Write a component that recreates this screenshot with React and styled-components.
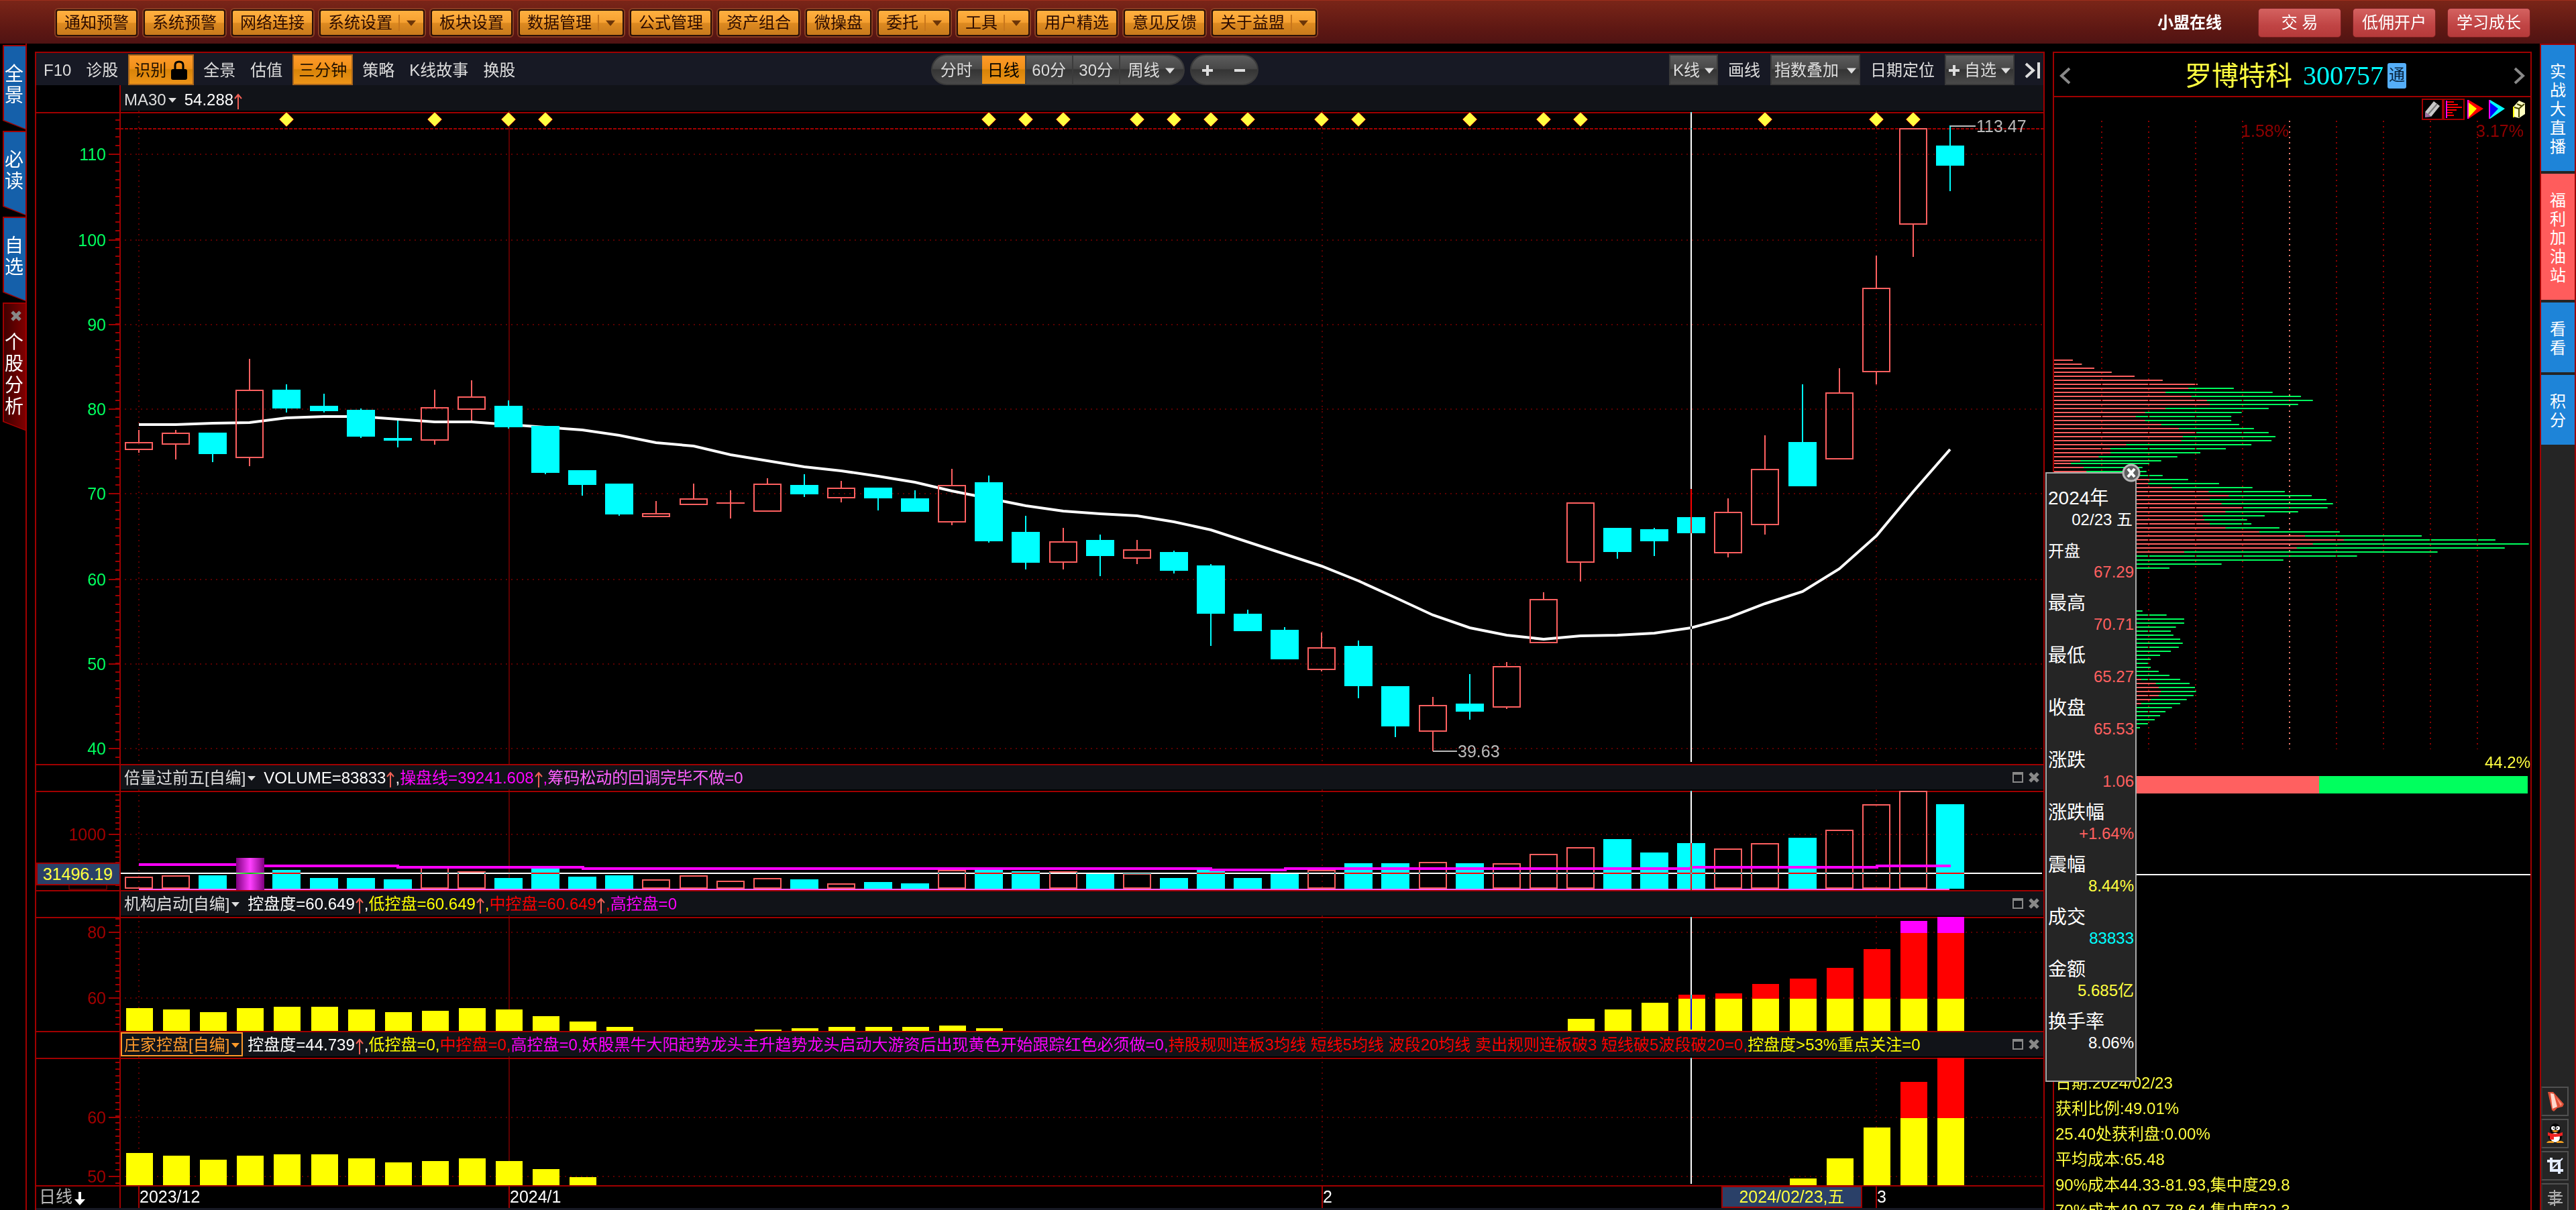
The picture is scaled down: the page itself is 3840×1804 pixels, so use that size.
import React from "react";
import styled, { createGlobalStyle, css } from "styled-components";

const RED = "#a00000";
const UP = "#ff6060";
const CYAN = "#00ffff";
const YELLOW = "#ffff40";

const menuItems = [
  ["通知预警"],
  ["系统预警"],
  ["网络连接"],
  ["系统设置", true],
  ["板块设置"],
  ["数据管理", true],
  ["公式管理"],
  ["资产组合"],
  ["微操盘"],
  ["委托", true],
  ["工具", true],
  ["用户精选"],
  ["意见反馈"],
  ["关于益盟", true],
];

// [up, high, top, bottom, low]
const candles = [
  [1, 641, 659, 671, 675],
  [1, 641, 645, 663, 685],
  [0, 645, 645, 677, 689],
  [1, 535, 581, 683, 695],
  [0, 573, 581, 609, 615],
  [0, 587, 605, 613, 615],
  [0, 609, 611, 651, 653],
  [0, 627, 653, 657, 667],
  [1, 581, 607, 657, 663],
  [1, 567, 591, 611, 627],
  [0, 597, 605, 637, 639],
  [0, 635, 635, 705, 707],
  [0, 701, 701, 723, 739],
  [0, 721, 721, 767, 769],
  [1, 747, 765, 771, 771],
  [1, 721, 743, 753, 753],
  [1, 731, 749, 751, 773],
  [1, 713, 721, 763, 763],
  [0, 707, 723, 737, 741],
  [1, 717, 727, 743, 749],
  [0, 727, 727, 743, 761],
  [0, 731, 743, 763, 763],
  [1, 699, 723, 779, 783],
  [0, 709, 719, 807, 809],
  [0, 769, 793, 839, 849],
  [1, 787, 807, 839, 849],
  [0, 797, 805, 829, 859],
  [1, 805, 819, 833, 841],
  [0, 821, 823, 851, 855],
  [0, 841, 843, 915, 963],
  [0, 909, 915, 941, 941],
  [0, 935, 939, 983, 983],
  [1, 943, 965, 999, 1001],
  [0, 955, 963, 1023, 1041],
  [0, 1023, 1023, 1083, 1099],
  [1, 1039, 1051, 1091, 1120],
  [0, 1005, 1049, 1061, 1073],
  [1, 987, 993, 1055, 1057],
  [1, 883, 893, 959, 959],
  [1, 749, 749, 839, 867],
  [0, 787, 787, 823, 833],
  [0, 787, 789, 807, 829],
  [0, 729, 771, 795, 795],
  [1, 743, 763, 825, 831],
  [1, 649, 699, 783, 797],
  [0, 573, 659, 725, 725],
  [1, 549, 585, 685, 685],
  [1, 381, 429, 555, 573],
  [1, 191, 191, 335, 383],
  [0, 187, 217, 247, 285],
];

const ma30 = [
  633, 633, 631, 630, 623, 621, 621, 625, 629, 629, 633, 637, 641, 649, 660,
  665, 678, 687, 696, 702, 710, 719, 732, 743, 754, 762, 766, 769, 778, 790,
  808, 826, 844, 866, 891, 917, 936, 947, 953, 948, 947, 944, 936, 921, 900,
  882, 848, 799, 733, 670,
];

const volumeTops = [
  1307, 1305, 1305, 1279, 1297, 1309, 1309, 1311, 1293, 1299, 1309, 1295, 1307,
  1305, 1311, 1305, 1313, 1309, 1311, 1317, 1315, 1317, 1297, 1297, 1299, 1299,
  1303, 1302, 1309, 1297, 1309, 1303, 1297, 1287, 1287, 1285, 1287, 1287, 1273,
  1263, 1251, 1271, 1257, 1265, 1257, 1249, 1237, 1199, 1179, 1199,
];

const startTops = {
  0: 1503, 1: 1505, 2: 1509, 3: 1503, 4: 1501, 5: 1501, 6: 1505, 7: 1509,
  8: 1507, 9: 1503, 10: 1505, 11: 1515, 12: 1523, 13: 1531, 17: 1535,
  18: 1533, 19: 1531, 20: 1531, 21: 1531, 22: 1529, 23: 1533, 39: 1519,
  40: 1505, 41: 1495, 42: 1483, 43: 1481, 44: 1467, 45: 1459, 46: 1443,
  47: 1415, 48: 1373, 49: 1367,
};

const bankerTops = {
  0: 1719, 1: 1723, 2: 1729, 3: 1723, 4: 1721, 5: 1721, 6: 1727, 7: 1733,
  8: 1731, 9: 1727, 10: 1731, 11: 1743, 12: 1755, 45: 1757, 46: 1727,
  47: 1681, 48: 1613, 49: 1577,
};

const signals = [
  4, 8, 10, 11, 23, 24, 25, 27, 28, 29, 30, 32, 33, 36, 38, 39, 44, 47, 48,
];

// chip distribution rows: [profit, total]
const chipsHigh = [
  [52, 52], [77, 77], [112, 112], [160, 160], [224, 224], [302, 302],
  [399, 399], [374, 500], [310, 608], [382, 687], [425, 720], [433, 679],
  [310, 597], [253, 522], [227, 493], [253, 493], [298, 515], [347, 556],
  [395, 597], [358, 616], [354, 605], [201, 549], [157, 478], [157, 407],
  [124, 343], [73, 298],
];
const chipsMid = [
  [47, 265], [82, 246], [90, 257], [180, 302], [265, 373], [262, 459],
  [328, 552], [430, 642], [486, 717], [433, 758], [466, 776], [526, 761],
  [477, 679], [414, 586], [418, 537], [433, 549], [477, 627], [571, 795],
  [698, 1023], [806, 1228], [720, 1321], [675, 1254], [362, 1067], [0, 843],
  [0, 638], [0, 466], [0, 321],
];
const chipsLow = [
  [0, 246], [0, 313], [0, 362], [0, 362], [231, 339], [0, 325], [0, 332],
  [0, 351], [0, 358], [0, 347], [0, 325], [0, 295], [0, 269], [0, 261],
  [0, 269], [0, 291], [0, 321], [242, 351], [283, 377], [291, 392],
  [297, 395], [291, 388], [269, 369], [242, 351], [0, 328], [0, 310],
  [0, 295], [0, 280], [0, 261], [0, 239],
];
const chipGroups = [
  [537, chipsHigh],
  [691, chipsMid],
  [911, chipsLow],
];
const CHIP_SCALE = 0.5357;

const quote = [
  ["开盘", "67.29", UP],
  ["最高", "70.71", UP],
  ["最低", "65.27", UP],
  ["收盘", "65.53", UP],
  ["涨跌", "1.06", UP],
  ["涨跌幅", "+1.64%", UP],
  ["震幅", "8.44%", YELLOW],
  ["成交", "83833", CYAN],
  ["金额", "5.685亿", YELLOW],
  ["换手率", "8.06%", "#fff"],
];

const cx = (i) => 207 + Math.round((i * 2700) / 49);
const range = (from, to, step) => {
  const out = [];
  for (let v = from; v <= to; v += step) out.push(Math.round(v));
  return out;
};

const GlobalStyle = createGlobalStyle`
  * { box-sizing: border-box; }
  body {
    margin: 0;
    background: #000;
    color: #ddd;
    overflow: hidden;
    font: 24px/28px "Liberation Sans", "Noto Sans CJK SC", sans-serif;
  }
  button {
    font: inherit;
    color: inherit;
    background: none;
    border: none;
    padding: 0;
    margin: 0;
    white-space: nowrap;
    cursor: pointer;
  }
  svg { display: block; flex: none; }
`;

/* ---------- top menu ---------- */

const MenuBar = styled.header`
  display: flex;
  align-items: center;
  height: 65px;
  padding: 2px 68px 0 83px;
  border-top: 1px solid #9b2e1c;
  background: linear-gradient(#7a2518, #5c1713 70%, #501313);
`;

const MenuList = styled.nav`
  display: flex;
  gap: 9px;
  flex: 1;
`;

const MenuButton = styled.button`
  display: flex;
  align-items: center;
  height: 40px;
  padding: 0 11px;
  color: #2a0a00;
  border: 2px solid #2a1005;
  border-radius: 4px;
  box-shadow: 0 0 0 2px #8a3d22;
  background: linear-gradient(#ffb040, #f5a030 48%, #dd8a20 52%, #c87a1c);
`;

const MenuArrow = styled.span`
  margin-left: 9px;
  padding-left: 10px;
  border-left: 2px solid #c8761c;
  display: flex;
  align-items: center;
  height: 24px;
`;

const OnlineLabel = styled.a`
  color: #fff;
  font-weight: bold;
  text-decoration: none;
  margin-right: 54px;
`;

const RedButton = styled.button`
  width: 124px;
  height: 44px;
  margin-left: 17px;
  color: #fff;
  white-space: pre;
  border-radius: 5px;
  border: 1px solid #7a2020;
  background: linear-gradient(#d46260, #c04444 60%, #b53a3a);

  &:first-of-type {
    margin-left: 0;
  }
`;

/* ---------- page frame ---------- */

const Frame = styled.div`
  display: flex;
  align-items: stretch;
  height: calc(100vh - 65px);
  overflow: hidden;
`;

const LeftRail = styled.nav`
  width: 36px;
  margin-left: 4px;
  padding-top: 2px;
  border-right: 2px solid ${RED};
`;

const LeftTab = styled.button`
  display: flex;
  flex-direction: column;
  align-items: flex-start;
  justify-content: flex-start;
  position: relative;
  width: 36px;
  height: ${(p) => (p.$active ? 192 : 127)}px;
  margin-bottom: 1px;
  padding: ${(p) => (p.$active ? "0" : "28px")} 3px 0;
  color: #fff;
  font-size: 28px;
  line-height: 32px;
  white-space: normal;
  word-break: break-all;
  background: ${RED};
  clip-path: polygon(0 0, 100% 0, 100% 100%, 0 calc(100% - 14px));
  text-align: left;

  &::before {
    content: "";
    position: absolute;
    inset: 2px;
    background: ${(p) =>
      p.$active ? "linear-gradient(90deg, #400000, #800000)" : "#1560aa"};
    clip-path: polygon(0 0, 100% 0, 100% 100%, 0 calc(100% - 13px));
  }
`;

const TabText = styled.span`
  position: relative;
  display: block;
  width: 28px;
`;

const TabClose = styled.span`
  position: relative;
  display: block;
  padding: 12px 0 16px 9px;
`;

const ChartPanel = styled.main`
  flex: 1;
  min-width: 0;
  margin: 12px 12px 0 12px;
  border: 2px solid ${RED};
  border-bottom: none;
`;

const ToolBar = styled.div`
  display: flex;
  justify-content: space-between;
  height: 48px;
  padding: 2px 0 0;
  background: #171924;
`;

const ToolGroup = styled.div`
  display: flex;
  height: 46px;
`;

const flatButton = css`
  height: 46px;
  padding: 2px 11px 0;
`;

const ToolButton = styled.button`
  ${flatButton}
  ${(p) => p.$last && "padding-right: 4px;"}
`;

const HotButton = styled.button`
  ${flatButton}
  display: flex;
  align-items: center;
  gap: 6px;
  margin: 0 3px 0 4px;
  padding: 2px 7px 0;
  color: #201000;
  border: 2px solid #a8651c;
  background: linear-gradient(#ff9a2a, #f09018 46%, #d88408 50%, #ee9418);
`;

const grey = css`
  background: linear-gradient(#5c5c5c, #484848 46%, #343434 50%, #4a4a4a);
`;

const Pill = styled.div`
  ${grey}
  display: flex;
  overflow: hidden;
  margin-right: ${(p) => (p.$last ? 0 : 8)}px;
  border-radius: 23px;
  border: 2px solid #3a3a3a;
`;

const Period = styled.button`
  display: flex;
  align-items: center;
  justify-content: center;
  gap: 8px;
  width: ${(p) => p.$w}px;
  padding-top: 2px;
  border-right: 2px solid ${(p) => (p.$edge ? "transparent" : "#3c3c3c")};
  ${(p) =>
    p.$active &&
    css`
      color: #000;
      background: linear-gradient(#ff9a2a, #f09018 46%, #d88408 50%, #ee9418);
    `}
`;

const GreyButton = styled.button`
  ${grey}
  display: flex;
  align-items: center;
  gap: ${(p) => (p.$wide ? 12 : 7)}px;
  height: 46px;
  padding: 2px 4px 0;
  border: 2px solid #3a3a3a;
  margin: 0 4px;
`;

const IndicatorBar = styled.div`
  display: flex;
  align-items: center;
  height: ${(p) => (p.$first ? 38 : 36)}px;
  padding-top: ${(p) => (p.$first ? 4 : 0)}px;
  margin-left: 124px;
  border-left: 2px solid ${RED};
  background: #111318;
  white-space: nowrap;
`;

const Divider = styled.div`
  height: 2px;
  background: ${RED};
`;

const IndicatorName = styled.button`
  display: flex;
  align-items: center;
  gap: 3px;
  height: 36px;
  padding: 2px 3px 0;
  margin-right: 7px;
  border: 2px solid ${(p) => (p.$selected ? "#ff9a2a" : "transparent")};
  color: ${(p) => (p.$selected ? "#ff9a2a" : "#ddd")};
`;

const Reading = styled.span`
  padding-top: 2px;
  color: ${(p) => p.$color};
`;

const Rise = styled.span`
  display: inline-block;
  width: 14px;
  height: 24px;
  vertical-align: -6px;
`;

const WindowButtons = styled.div`
  display: flex;
  gap: 8px;
  margin-left: auto;
  padding-right: 6px;
`;

const Plot = styled.svg`
  width: 100%;
  height: auto;
  overflow: visible;
  background: #000;
  text {
    font: 25px "Liberation Sans", "Noto Sans CJK SC", sans-serif;
  }
`;

const Crosshair = styled.path`
  stroke: #fff;
  stroke-width: 2;
  mix-blend-mode: difference;
`;

const FooterStrip = styled.div`
  height: 6px;
  background: #171924;
`;

/* ---------- right side ---------- */

const ChipPanel = styled.aside`
  position: relative;
  width: 714px;
  margin: 12px 12px 0 0;
  border: 2px solid ${RED};
  border-bottom: none;
`;

const StockTitle = styled.div`
  display: flex;
  align-items: center;
  justify-content: space-between;
  height: 66px;
  padding: 4px 6px 0;
  border-bottom: 2px solid ${RED};
`;

const StockName = styled.h1`
  display: flex;
  align-items: center;
  margin: 0 0 0 10px;
  font-size: 40px;
  line-height: 48px;
  font-weight: normal;
  color: ${YELLOW};
`;

const StockCode = styled.span`
  margin: 0 6px 0 16px;
  font-family: "Liberation Serif", serif;
  color: ${CYAN};
`;

const Badge = styled.span`
  width: 28px;
  height: 38px;
  font-size: 24px;
  line-height: 36px;
  text-align: center;
  color: #06223c;
  background: #55aef8;
  border-radius: 3px;
`;

const ChipTools = styled.div`
  display: flex;
  justify-content: flex-end;
  height: 34px;
  padding: 2px 2px 0 0;
`;

const ChipTool = styled.button`
  width: 32px;
  height: 32px;
  border: 2px solid ${(p) => (p.$framed ? RED : "transparent")};
`;

const ChipSummary = styled.div`
  height: 38px;
  padding-top: 4px;
  color: ${YELLOW};
  text-align: right;
`;

const RatioBar = styled.div`
  display: flex;
  height: 26px;
  margin-right: 4px;
  background: linear-gradient(90deg, ${UP} 56%, #00ff5e 56%);
`;

const LevelLine = styled.div`
  height: 413px;
  padding-top: 120px;

  &::before {
    content: "";
    display: block;
    height: 2px;
    background: #fff;
  }
`;

const CostList = styled.ul`
  margin: 0;
  padding: 0 2px;
  list-style: none;
  color: ${YELLOW};
  line-height: 38px;
`;

const Popup = styled.section`
  position: absolute;
  left: -13px;
  top: 625px;
  width: 136px;
  height: 909px;
  padding: 20px 2px 0;
  border: 2px solid #aaa;
  background: #252525;
  color: #fff;
`;

const PopupClose = styled.button`
  position: absolute;
  top: -15px;
  right: -8px;
`;

const Year = styled.div`
  font-size: 28px;
  line-height: 34px;
`;

const Day = styled.div`
  margin-bottom: 15px;
  padding-right: 2px;
  line-height: 30px;
  text-align: right;
`;

const QuoteList = styled.dl`
  margin: 0;
`;

const QuoteLabel = styled.dt`
  font-size: ${(p) => (p.$small ? 24 : 28)}px;
  line-height: 34px;
`;

const QuoteValue = styled.dd`
  margin: 0 0 16px;
  line-height: 28px;
  text-align: right;
  color: ${(p) => p.$color};
`;

const RightRail = styled.nav`
  display: flex;
  flex-direction: column;
  width: 54px;
  border-left: 2px solid ${RED};
  border-right: 2px solid ${RED};
  border-top: 2px solid ${RED};
  background: #252525;
`;

const SideTab = styled.button`
  width: 50px;
  height: ${(p) => p.$h}px;
  margin-bottom: 4px;
  padding: 4px 13px 0;
  color: #fff;
  line-height: 28px;
  white-space: normal;
  word-break: break-all;
  background: ${(p) => (p.$hot ? "#ff5c5c" : "#1e84d8")};
`;

const SideTools = styled.div`
  margin-top: auto;
  height: 184px;
`;

const SideTool = styled.button`
  display: flex;
  align-items: center;
  justify-content: center;
  width: 41px;
  height: 44px;
  margin-bottom: 4px;
  border: 2px solid #505050;
  border-left-color: #333;
`;

const Caret = ({ size = 12, color = "#ddd" }) => (
  <svg width={size} height={size} viewBox="0 0 12 12">
    <path d="M0 3h12L6 10z" fill={color} />
  </svg>
);

const Cross = ({ size = 16 }) => (
  <svg width={size} height={size} viewBox="0 0 16 16">
    <path d="M2 2l12 12M14 2L2 14" stroke="#888" strokeWidth="5" />
  </svg>
);

const Axis = ({ top, bottom, from, step, labels, color }) => (
  <>
    <path
      d={range(from, bottom - 3, step)
        .map((y) => `M172 ${y}h6`)
        .join("")}
      stroke={RED}
      strokeWidth="2"
    />
    <rect x="178" y={top} width="2" height={bottom - top} fill={RED} />
    {labels.map(([text, y]) => (
      <g key={text}>
        <path d={`M162 ${y}h16`} stroke={RED} strokeWidth="2" />
        <path
          d={`M186 ${y}H3046`}
          stroke="#5c0000"
          strokeWidth="2"
          strokeDasharray="2 6"
        />
        <text x="158" y={y + 9} textAnchor="end" fill={color}>
          {text}
        </text>
      </g>
    ))}
    <path
      d={`M207 ${top}V${bottom}M1971 ${top}V${bottom}M2797 ${top}V${bottom}`}
      stroke="#5c0000"
      strokeWidth="2"
      strokeDasharray="2 6"
    />
    <path d={`M759 ${top}V${bottom}`} stroke="#5c0000" strokeWidth="2" />
    <rect x="54" y={top + 2} width="2992" height="2" fill={RED} />
  </>
);

const PricePlot = () => (
  <Plot viewBox="54 165 2992 974" role="img" aria-label="K线">
    <Axis
      top={165}
      bottom={1139}
      from={179}
      step={12.66}
      color="#00ff5e"
      labels={[
        ["110", 230],
        ["100", 358],
        ["90", 484],
        ["80", 610],
        ["70", 736],
        ["60", 864],
        ["50", 990],
        ["40", 1116],
      ]}
    />
    <path d="M172 192H3046" stroke={RED} strokeWidth="2" strokeDasharray="5 2" />
    <polyline
      points={ma30.map((y, i) => `${cx(i)},${y}`).join(" ")}
      fill="none"
      stroke="#fff"
      strokeWidth="4"
    />
    {candles.map(([up, high, top, bottom, low], i) => {
      const x = cx(i);
      const color = up ? UP : CYAN;
      return (
        <g key={i} stroke={color} strokeWidth="2">
          <path d={`M${x} ${high}V${top}M${x} ${bottom}V${low}`} />
          {bottom - top > 2 ? (
            <rect
              x={x - 20}
              y={top + 1}
              width="40"
              height={bottom - top - 2}
              fill={up ? "none" : color}
            />
          ) : (
            <path d={`M${x - 21} ${top + 1}h42`} />
          )}
        </g>
      );
    })}
    {signals.map((i) => (
      <path
        key={i}
        d={`M${cx(i)} 167l11 11l-11 11l-11 -11z`}
        fill={YELLOW}
        stroke={RED}
      />
    ))}
    <path d="M2907 188h38M2136 1120h36" stroke="#bbb" strokeWidth="2" />
    <text x="2946" y="197" fill="#bbb">113.47</text>
    <text x="2173" y="1129" fill="#bbb">39.63</text>
    <Crosshair d="M2521 167V1136" />
  </Plot>
);

const VolumePlot = () => (
  <Plot viewBox="54 1177 2992 150" role="img" aria-label="成交量">
    <defs>
      <linearGradient id="burst">
        <stop offset="0" stopColor="#800080" />
        <stop offset="0.5" stopColor="#ff40ff" />
        <stop offset="1" stopColor="#800080" />
      </linearGradient>
    </defs>
    <Axis
      top={1177}
      bottom={1327}
      from={1185}
      step={8.45}
      color={RED}
      labels={[["1000", 1244]]}
    />
    <rect x="103" y="1295" width="56" height="31" fill="#000" stroke={RED} />
    {volumeTops.map((y, i) => {
      const x = cx(i);
      if (i === 3) return null;
      return candles[i][0] ? (
        <rect
          key={i}
          x={x - 20}
          y={y + 1}
          width="40"
          height={1324 - y - 1}
          fill="none"
          stroke={UP}
          strokeWidth="2"
        />
      ) : (
        <rect key={i} x={x - 21} y={y} width="42" height={1325 - y} fill={CYAN} />
      );
    })}
    <path
      d="M207 1289H372V1291H593V1293H869V1295H1805V1297H1916V1295H2521V1293H2798V1291H2908"
      fill="none"
      stroke="#f0f"
      strokeWidth="4"
    />
    <path d="M207 1326H2906" stroke="#ff60ff" strokeWidth="2" />
    <rect x="352" y="1279" width="42" height="48" fill="url(#burst)" />
    <Crosshair d="M180 1302H3044" />
    <Crosshair d="M2521 1179V1327" />
    <rect x="55" y="1287" width="124" height="32" fill="#2a4068" stroke={RED} strokeWidth="2" />
    <text x="168" y="1312" textAnchor="end" fill={YELLOW}>31496.19</text>
  </Plot>
);

const ControlPlot = ({ label, top, bottom, from, step, labels, tops, mid, high }) => (
  <Plot viewBox={`54 ${top} 2992 ${bottom - top}`} role="img" aria-label={label}>
    <Axis
      top={top}
      bottom={bottom}
      from={from}
      step={step}
      color={RED}
      labels={labels}
    />
    {Object.entries(tops).map(([i, y]) => {
      const x = cx(Number(i)) - 19;
      const yellowTop = Math.max(y, mid);
      const redTop = Math.max(y, high);
      return (
        <g key={i}>
          <rect x={x} y={yellowTop} width="40" height={bottom - yellowTop} fill="#ff0" />
          {y < mid && (
            <rect x={x} y={redTop} width="40" height={mid - redTop} fill="#f00" />
          )}
          {y < high && (
            <rect x={x} y={y} width="40" height={high - y} fill="#f0f" />
          )}
        </g>
      );
    })}
    <Crosshair d={`M2521 ${top + 2}V${bottom - 2}`} />
  </Plot>
);

const DateAxis = () => (
  <Plot viewBox="54 1769 2992 32" role="img" aria-label="日期">
    <path
      d="M179 1769v32M207 1769v32M759 1769v32M1971 1769v32M2797 1769v32"
      stroke={RED}
      strokeWidth="2"
    />
    <text x="58" y="1793" fill="#bbb">日线</text>
    <path d="M117 1777h4v11h6l-8 9l-8 -9h6z" fill="#fff" />
    <g fill="#fff">
      <text x="208" y="1793">2023/12</text>
      <text x="760" y="1793">2024/1</text>
      <text x="1972" y="1793">2</text>
      <text x="2798" y="1793">3</text>
    </g>
    <rect x="2567" y="1769" width="208" height="31" fill="#2a4068" stroke={RED} strokeWidth="2" />
    <text x="2671" y="1793" textAnchor="middle" fill={YELLOW}>2024/02/23,五</text>
  </Plot>
);

// parts: [text, color, rising]
const Indicator = ({ name, selected, first, parts }) => (
  <IndicatorBar $first={first}>
    <IndicatorName $selected={selected}>
      {name}
      <Caret color={selected ? "#ff9a2a" : "#ddd"} />
    </IndicatorName>
    {parts.map(([text, color, rising], i) => (
      <Reading key={text} $color={color}>
        {text}
        {rising && (
          <Rise>
            <svg width="14" height="24" viewBox="0 0 14 24">
              <path d="M7 24V2M2 8L7 2L12 8" fill="none" stroke="#f26055" strokeWidth="2" />
            </svg>
          </Rise>
        )}
        {i < parts.length - 1 && ","}
      </Reading>
    ))}
    {!first && (
      <WindowButtons>
        <button aria-label="最大化">
          <svg width="16" height="16" viewBox="0 0 16 16">
            <path d="M1 2h14v13H1z" fill="none" stroke="#888" strokeWidth="2" />
            <path d="M0 2h16" stroke="#888" strokeWidth="4" />
          </svg>
        </button>
        <button aria-label="关闭">
          <Cross />
        </button>
      </WindowButtons>
    )}
  </IndicatorBar>
);

const ChipPlot = () => (
  <Plot viewBox="3062 180 710 940" role="img" aria-label="筹码分布">
    {chipGroups.map(([start, rows]) =>
      rows.map(([profit, total], k) => {
        const y = start + k * 6;
        return (
          <g key={y}>
            <rect x="3062" y={y} width={total * CHIP_SCALE} height="2" fill="#00ff5e" />
            <rect x="3062" y={y} width={profit * CHIP_SCALE} height="2" fill={UP} />
          </g>
        );
      })
    )}
    {range(3133, 3693, 70).map((x) => (
      <path
        key={x}
        d={`M${x} 181V1118`}
        stroke={x === 3413 ? "#ff8070" : "#900000"}
        strokeWidth="2"
        strokeDasharray="2 6"
      />
    ))}
    <text x="3412" y="205" textAnchor="end" fill="#900000">1.58%</text>
    <text x="3762" y="205" textAnchor="end" fill="#900000">3.17%</text>
  </Plot>
);

const Chevron = ({ d }) => (
  <svg width="20" height="26" viewBox="0 0 20 26">
    <path d={d} fill="none" stroke="#888" strokeWidth="4" />
  </svg>
);

const App = () => {
  return (
    <>
      <GlobalStyle />
      <MenuBar>
        <MenuList>
          {menuItems.map(([label, hasMenu]) => (
            <MenuButton key={label}>
              {label}
              {hasMenu && (
                <MenuArrow>
                  <Caret size={14} color="#6b3508" />
                </MenuArrow>
              )}
            </MenuButton>
          ))}
        </MenuList>
        <OnlineLabel href="#online">小盟在线</OnlineLabel>
        <RedButton>交 易</RedButton>
        <RedButton>低佣开户</RedButton>
        <RedButton>学习成长</RedButton>
      </MenuBar>
      <Frame>
        <LeftRail>
          {["全景", "必读", "自选"].map((label) => (
            <LeftTab key={label}>
              <TabText>{label}</TabText>
            </LeftTab>
          ))}
          <LeftTab $active>
            <TabClose>
              <Cross />
            </TabClose>
            <TabText>个股分析</TabText>
          </LeftTab>
        </LeftRail>
        <ChartPanel>
          <ToolBar>
            <ToolGroup>
              <ToolButton>F10</ToolButton>
              <ToolButton>诊股</ToolButton>
              <HotButton>
                识别
                <svg width="26" height="30" viewBox="0 0 26 30">
                  <path d="M7 13V7q0-5 6-5t6 5v6" fill="none" stroke="#000" strokeWidth="3" />
                  <rect x="1" y="13" width="24" height="16" rx="3" fill="#000" />
                </svg>
              </HotButton>
              <ToolButton>全景</ToolButton>
              <ToolButton>估值</ToolButton>
              <HotButton>三分钟</HotButton>
              <ToolButton>策略</ToolButton>
              <ToolButton>K线故事</ToolButton>
              <ToolButton>换股</ToolButton>
            </ToolGroup>
            <ToolGroup>
              <Pill>
                <Period $w={74} $edge>分时</Period>
                <Period $w={66} $active>日线</Period>
                <Period $w={70}>60分</Period>
                <Period $w={70}>30分</Period>
                <Period $w={94} $edge>
                  周线
                  <Caret size={14} />
                </Period>
              </Pill>
              <Pill $last>
                <Period $w={50} $edge aria-label="放大">
                  <svg width="18" height="18" viewBox="0 0 18 18">
                    <path d="M9 1v16M1 9h16" stroke="#ddd" strokeWidth="4" />
                  </svg>
                </Period>
                <Period $w={48} $edge aria-label="缩小">
                  <svg width="18" height="18" viewBox="0 0 18 18">
                    <path d="M0 9h16" stroke="#ddd" strokeWidth="4" />
                  </svg>
                </Period>
              </Pill>
            </ToolGroup>
            <ToolGroup>
              <GreyButton>
                K线
                <Caret size={14} />
              </GreyButton>
              <ToolButton>画线</ToolButton>
              <GreyButton $wide>
                指数叠加
                <Caret size={14} />
              </GreyButton>
              <ToolButton>日期定位</ToolButton>
              <GreyButton>
                <svg width="16" height="16" viewBox="0 0 16 16">
                  <path d="M8 0v16M0 8h16" stroke="#ddd" strokeWidth="4" />
                </svg>
                自选
                <Caret size={14} />
              </GreyButton>
              <ToolButton $last aria-label="展开">
                <svg width="24" height="26" viewBox="0 0 24 26">
                  <path d="M2 3l11 10L2 23" fill="none" stroke="#ddd" strokeWidth="4" />
                  <path d="M21 1v24" stroke="#ddd" strokeWidth="4" />
                </svg>
              </ToolButton>
            </ToolGroup>
          </ToolBar>
          <Indicator first name="MA30" parts={[["54.288", "#fff", true]]} />
          <PricePlot />
          <Divider />
          <Indicator
            name="倍量过前五[自编]"
            parts={[
              ["VOLUME=83833", "#fff", true],
              ["操盘线=39241.608", "#f0f", true],
              ["筹码松动的回调完毕不做=0", "#ff60ff"],
            ]}
          />
          <VolumePlot />
          <Divider />
          <Indicator
            name="机构启动[自编]"
            parts={[
              ["控盘度=60.649", "#fff", true],
              ["低控盘=60.649", "#ff0", true],
              ["中控盘=60.649", "#f00", true],
              ["高控盘=0", "#f0f"],
            ]}
          />
          <ControlPlot
            label="机构启动"
            top={1365}
            bottom={1537}
            from={1370}
            step={9.8}
            labels={[
              ["80", 1390],
              ["60", 1488],
            ]}
            tops={startTops}
            mid={1489}
            high={1391}
          />
          <Divider />
          <Indicator
            selected
            name="庄家控盘[自编]"
            parts={[
              ["控盘度=44.739", "#fff", true],
              ["低控盘=0", "#ff0"],
              ["中控盘=0", "#f00"],
              ["高控盘=0", "#f0f"],
              [
                "妖股黑牛大阳起势龙头主升趋势龙头启动大游资后出现黄色开始跟踪红色必须做=0",
                "#f0f",
              ],
              [
                "持股规则连板3均线 短线5均线 波段20均线 卖出规则连板破3 短线破5波段破20=0",
                "#f00",
              ],
              ["控盘度>53%重点关注=0", "#ff0"],
            ]}
          />
          <ControlPlot
            label="庄家控盘"
            top={1575}
            bottom={1767}
            from={1584}
            step={10}
            labels={[
              ["60", 1666],
              ["50", 1754],
            ]}
            tops={bankerTops}
            mid={1667}
            high={0}
          />
          <Divider />
          <DateAxis />
          <FooterStrip />
        </ChartPanel>
        <ChipPanel>
          <StockTitle>
            <button aria-label="上一只">
              <Chevron d="M17 2L5 13L17 24" />
            </button>
            <StockName>
              罗博特科
              <StockCode>300757</StockCode>
              <Badge>通</Badge>
            </StockName>
            <button aria-label="下一只">
              <Chevron d="M3 2L15 13L3 24" />
            </button>
          </StockTitle>
          <ChipTools>
            <ChipTool $framed aria-label="画笔">
              <svg width="28" height="28" viewBox="0 0 28 28">
                <path d="M3 18L16 2l9 7L12 25z" fill="#c8c8c8" />
                <path d="M3 18l0 8l9-1z" fill="#a070a0" />
                <path d="M8 21L21 6" stroke="#777" strokeWidth="2" />
              </svg>
            </ChipTool>
            <ChipTool $framed aria-label="分布">
              <svg width="28" height="28" viewBox="0 0 28 28">
                <path
                  d="M4 3h10M4 7h16M4 11h22M4 15h14M4 19h8M4 23h10"
                  stroke="#f00"
                  strokeWidth="2"
                />
                <path d="M3 1v26" stroke="#f0f" strokeWidth="2" />
              </svg>
            </ChipTool>
            <ChipTool aria-label="获利">
              <svg width="28" height="28" viewBox="0 0 28 28">
                <path d="M4 0l22 13L4 28z" fill="#f00" />
                <path d="M4 4l12 9L4 26z" fill="#ff0" />
                <path d="M3 0v28" stroke="#f0f" strokeWidth="2" />
              </svg>
            </ChipTool>
            <ChipTool aria-label="套牢">
              <svg width="28" height="28" viewBox="0 0 28 28">
                <path d="M4 0l22 13L4 28z" fill="#0ff" />
                <path d="M4 4l12 9L4 26z" fill="#00f" />
                <path d="M3 0v28" stroke="#f0f" strokeWidth="2" />
              </svg>
            </ChipTool>
            <ChipTool aria-label="说明">
              <svg width="28" height="28" viewBox="0 0 28 28">
                <path d="M7 10l8-9l9 4v16l-9 6l-8-2z" fill="#ffffc0" />
                <path d="M8 11l7 2v13M15 13l8-7M12 6l7 3" fill="none" stroke="#444400" strokeWidth="2" />
                <path d="M7 10v16" stroke="#ff0" strokeWidth="2" />
              </svg>
            </ChipTool>
          </ChipTools>
          <ChipPlot />
          <ChipSummary>44.2%</ChipSummary>
          <RatioBar />
          <LevelLine />
          <CostList>
            <li>日期:2024/02/23</li>
            <li>获利比例:49.01%</li>
            <li>25.40处获利盘:0.00%</li>
            <li>平均成本:65.48</li>
            <li>90%成本44.33-81.93,集中度29.8</li>
            <li>70%成本49.97-78.64,集中度22.3</li>
          </CostList>
          <Popup>
            <PopupClose aria-label="关闭">
              <svg width="28" height="28" viewBox="0 0 28 28">
                <circle cx="14" cy="14" r="12" fill="#606060" stroke="#b8b8b8" strokeWidth="3" />
                <path d="M9 8l10 12M19 8L9 20" stroke="#fff" strokeWidth="4" />
              </svg>
            </PopupClose>
            <Year>2024年</Year>
            <Day>02/23 五</Day>
            <QuoteList>
              {quote.map(([label, value, color], i) => (
                <React.Fragment key={label}>
                  <QuoteLabel $small={i === 0}>{label}</QuoteLabel>
                  <QuoteValue $color={color}>{value}</QuoteValue>
                </React.Fragment>
              ))}
            </QuoteList>
          </Popup>
        </ChipPanel>
        <RightRail>
          <SideTab $h={188}>实战大直播</SideTab>
          <SideTab $h={188} $hot>福利加油站</SideTab>
          <SideTab $h={104}>看看</SideTab>
          <SideTab $h={104}>积分</SideTab>
          <SideTools>
            <SideTool aria-label="喇叭">
              <svg width="28" height="30" viewBox="0 0 28 30">
                <path d="M3 1l8 0l16 18l-2 4l-8 2l-5 5l-3-2z" fill="#e05038" />
                <path d="M7 3l5 1l5 19l-7 3z" fill="#ffd8cc" />
                <path d="M15 8l9 11l-2 3z" fill="#ff9078" />
              </svg>
            </SideTool>
            <SideTool aria-label="QQ">
              <svg width="28" height="30" viewBox="0 0 28 30">
                <ellipse cx="14" cy="9" rx="8" ry="9" fill="#050505" />
                <ellipse cx="14" cy="20" rx="10" ry="8" fill="#050505" />
                <ellipse cx="11" cy="7" rx="3" ry="3" fill="#fff" />
                <ellipse cx="18" cy="7" rx="3" ry="3" fill="#fff" />
                <circle cx="12" cy="7" r="1" fill="#000" />
                <circle cx="17" cy="7" r="1" fill="#000" />
                <ellipse cx="14" cy="21" rx="7" ry="7" fill="#fff" />
                <path d="M3 13q11 5 22 0v5q-11 4-22 0z" fill="#e22" />
                <path d="M6 16h6v8H6z" fill="#e22" />
                <path d="M9 11q5-2 10 0q-5 4-10 0z" fill="#f5a020" />
                <path d="M1 29q2-5 11-2v2zM27 29q-2-5-11-2v2z" fill="#f5a020" />
              </svg>
            </SideTool>
            <SideTool aria-label="截图">
              <svg width="26" height="28" viewBox="0 0 26 28">
                <path d="M7 2v19h18M1 7h18v19" fill="none" stroke="#e4ecff" strokeWidth="4" />
                <path d="M9 18L24 3" stroke="#e4ecff" strokeWidth="2" />
              </svg>
            </SideTool>
            <SideTool aria-label="更多">
              <svg width="26" height="28" viewBox="0 0 26 28">
                <path
                  d="M4 6h18M2 11h22M5 16h17M2 21h22M12 2v24M6 13l14-5M5 24l15-6"
                  stroke="#aaa"
                  strokeWidth="2"
                />
              </svg>
            </SideTool>
          </SideTools>
        </RightRail>
      </Frame>
    </>
  );
};

export default App;
